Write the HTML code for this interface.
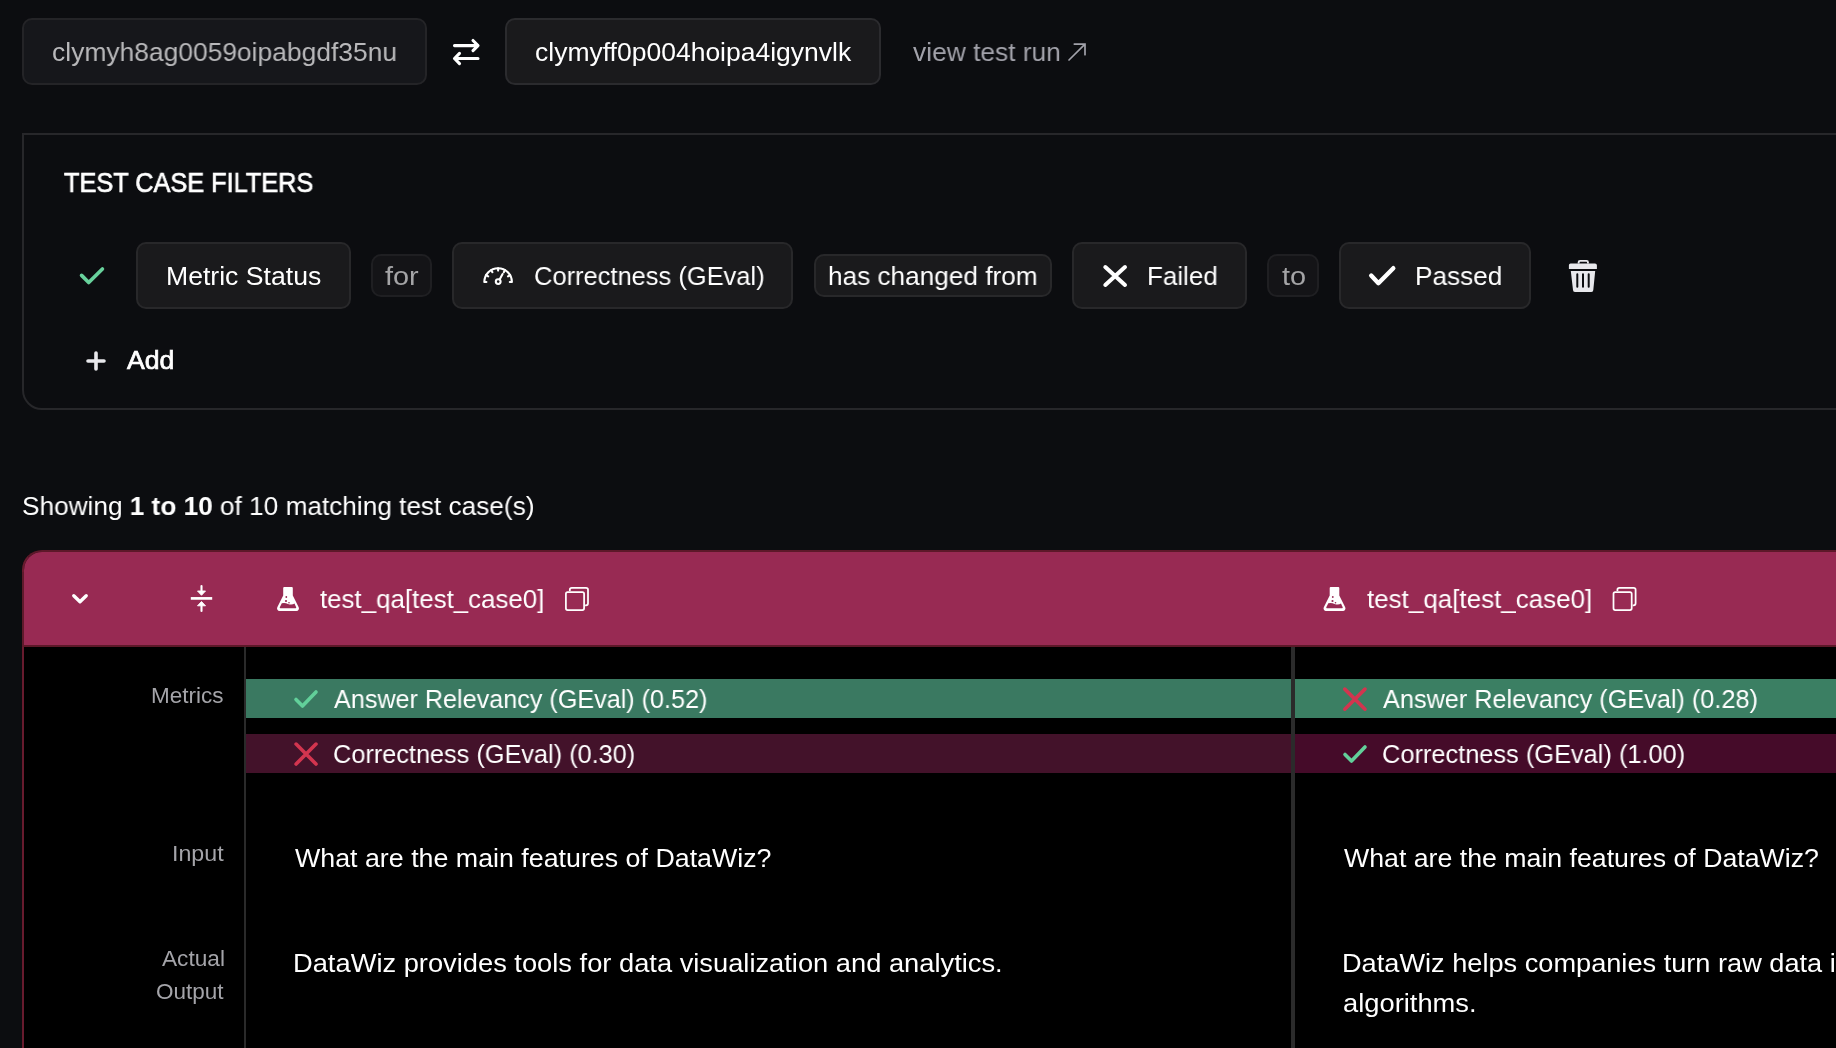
<!DOCTYPE html>
<html><head><meta charset="utf-8"><style>
html,body{margin:0;padding:0;}
body{width:1836px;height:1048px;overflow:hidden;background:#0c0d10;position:relative;font-family:"Liberation Sans",sans-serif;}
.a{position:absolute;box-sizing:border-box;}
.t{will-change:transform;position:absolute;white-space:nowrap;line-height:40px;font-family:"Liberation Sans",sans-serif;}
svg{position:absolute;overflow:visible;}
.box1{left:22px;top:18px;width:405px;height:67px;border:2px solid #242427;background:#16171b;border-radius:10px;}
.box2{left:505px;top:18px;width:376px;height:67px;border:2px solid #2b2b2e;background:#1a1a1c;border-radius:10px;}
.panel{left:22px;top:133px;width:1900px;height:277px;border:2px solid #27272a;border-bottom-left-radius:20px;}
.chip{border:2px solid #28282a;background:#1a1a1c;border-radius:10px;}
.chips{border:2px solid #1f1f22;background:#141417;border-radius:10px;}
.card{left:22px;top:550px;width:1900px;height:600px;border:2px solid #681b2e;border-top-color:#5d1829;border-top-left-radius:20px;background:#000;overflow:hidden;}
.hdr{left:0;top:0;width:100%;height:95px;background:#982a53;border-bottom:2px solid #5c1828;}

</style></head><body>
<div class="a box1"></div>
<div class="a box2"></div>
<svg style="left:0;top:0" width="1836" height="1048" viewBox="0 0 1836 1048">
 <!-- swap -->
 <g stroke="#fff" stroke-width="3.1" fill="none" stroke-linecap="round" stroke-linejoin="round">
  <path d="M454.5 45.6H478M473 40.5L478 45.6L473 50.7"/>
  <path d="M478 58.5H454.5M459.5 53.4L454.5 58.5L459.5 63.6"/>
 </g>
 <!-- arrow -->
 <g stroke="#a2a2aa" stroke-width="1.7" fill="none" stroke-linecap="round">
  <path d="M1069 60L1085 44.2M1074.3 44.1H1085V54.7"/>
 </g>
</svg>
<div class="a panel"></div>
<div class="a chip" style="left:136px;top:242px;width:215px;height:67px"></div>
<div class="a chips" style="left:371px;top:254px;width:61px;height:43px"></div>
<div class="a chip" style="left:452px;top:242px;width:341px;height:67px"></div>
<div class="a chip" style="left:814px;top:254px;width:238px;height:43px"></div>
<div class="a chip" style="left:1072px;top:242px;width:175px;height:67px"></div>
<div class="a chips" style="left:1267px;top:254px;width:52px;height:43px"></div>
<div class="a chip" style="left:1339px;top:242px;width:192px;height:67px"></div>
<div class="a card">
 <div class="a hdr"></div>
</div>
<div class="a" style="left:22px;top:572px;width:2px;height:75px;background:#5e1a2b"></div>
<div class="a" style="left:244px;top:647px;width:2px;height:401px;background:#2a2a2a"></div>
<div class="a" style="left:1291px;top:647px;width:4px;height:401px;background:#2b2b2b"></div>
<div class="a" style="left:246px;top:679px;width:1045px;height:39px;background:#3a7961"></div>
<div class="a" style="left:1295px;top:679px;width:541px;height:39px;background:#3b7f63"></div>
<div class="a" style="left:246px;top:734px;width:1045px;height:39px;background:#43122a"></div>
<div class="a" style="left:1295px;top:734px;width:541px;height:39px;background:#450b29"></div>
<svg style="left:0;top:0" width="1836" height="1048" viewBox="0 0 1836 1048">
 <!-- filter check -->
 <path d="M81.6 275.4L88.7 282.5L102.4 269" stroke="#68d19c" stroke-width="3.7" fill="none" stroke-linecap="round" stroke-linejoin="round"/>
 <!-- gauge -->
 <g stroke="#fff" stroke-width="2.1" fill="none" stroke-linecap="round">
  <path d="M484.3 282A13.8 13.8 0 0 1 511.9 282M484.3 282H486.4M511.9 282H509.8"/>
  <path d="M486.1 275.1L488.2 276.3M491.2 270.1L492.4 272.2M498.1 268.2V270.6M505 270.1L503.8 272.2M510.1 275.1L508 276.3"/>
  <circle cx="498.2" cy="281.6" r="2.4"/>
  <path d="M499.6 279.4L502.6 274"/>
 </g>
 <!-- X failed -->
 <path d="M1105.3 267L1125 285M1125 267L1105.3 285" stroke="#fff" stroke-width="4" stroke-linecap="round"/>
 <!-- check passed -->
 <path d="M1371.2 275.6L1378.4 283.2L1393.3 268.2" stroke="#fff" stroke-width="4.4" fill="none" stroke-linecap="round" stroke-linejoin="round"/>
 <!-- trash -->
 <g fill="#e8e8ec">
  <path d="M1577.7 263.6V262.2A2.3 2.3 0 0 1 1580 259.9H1586.6A2.3 2.3 0 0 1 1588.9 262.2V263.6H1587V262.2A0.5 0.5 0 0 0 1586.5 261.7H1580.1A0.5 0.5 0 0 0 1579.6 262.2V263.6Z"/>
  <path d="M1571 263.4H1595A1.9 1.9 0 0 1 1596.9 265.3V269.1H1568.9V265.3A1.9 1.9 0 0 1 1571 263.4Z"/>
  <path fill-rule="evenodd" d="M1570.8 271H1595.2L1593.3 290A2 2 0 0 1 1591.3 292H1575A2 2 0 0 1 1573 290Z M1576.3 274.3A1 1 0 0 1 1578.3 274.3V286.8A1 1 0 0 1 1576.3 286.8Z M1582 274.3A1 1 0 0 1 1584 274.3V286.8A1 1 0 0 1 1582 286.8Z M1587.7 274.3A1 1 0 0 1 1589.7 274.3V286.8A1 1 0 0 1 1587.7 286.8Z"/>
 </g>
 <!-- plus -->
 <path d="M96 353V369M88 361H104" stroke="#e8e8ec" stroke-width="3.6" stroke-linecap="round"/>
 <!-- chevron -->
 <path d="M73.8 595.8L80 601.8L86.2 595.8" stroke="#fff" stroke-width="3.4" fill="none" stroke-linecap="round" stroke-linejoin="round"/>
 <!-- compress -->
 <path d="M190.8 598.4H212.2" stroke="#fff" stroke-width="2.7"/>
 <path d="M201.5 586V591M201.5 606V611" stroke="#fff" stroke-width="2.1" stroke-linecap="round"/>
 <path d="M197.5 591H205.5L201.5 595.3Z M197.5 605.8H205.5L201.5 601.5Z" fill="#fff" stroke="#fff" stroke-width="0.9" stroke-linejoin="round"/>
 <!-- flask (header 1) -->
 <g id="flask">
  <path fill="#fff" fill-rule="evenodd" d="M284.2 587H291.8A1 1 0 0 1 292.8 588V595.5L298.7 607.3A2.5 2.5 0 0 1 296.5 610.9H279.5A2.5 2.5 0 0 1 277.3 607.3L283.2 595.5V588A1 1 0 0 1 284.2 587Z M281.8 603.3Q285 602.5 288 604Q292 605.3 294.5 603.6L295.8 606.5A1 1 0 0 1 295 608.3H281A1 1 0 0 1 280.2 606.5Z"/>
  <circle cx="286.3" cy="597" r="0.9" fill="#982a53"/>
  <circle cx="286" cy="601" r="1.1" fill="#982a53"/>
  <circle cx="289" cy="602.7" r="0.8" fill="#982a53"/>
 </g>
 <!-- copy (header 1) -->
 <g id="copy" stroke="#fff" stroke-width="1.75" fill="none">
  <rect x="565.9" y="592" width="18.2" height="18" rx="1.7"/>
  <path d="M569.8 591V589.8A2 2 0 0 1 571.8 587.8H586A2 2 0 0 1 588 589.8V603.3A2 2 0 0 1 586 605.3H585.1"/>
 </g>
 <use href="#flask" x="1046.5" y="0"/>
 <use href="#copy" x="1047.6" y="0"/>
 <!-- metric icons -->
 <path d="M296 699.5L302.5 706L316 692" stroke="#62d09a" stroke-width="3.6" fill="none" stroke-linecap="round" stroke-linejoin="round"/>
 <path d="M296.1 744.1L316 764M316 744.1L296.1 764" stroke="#d2354f" stroke-width="3.6" stroke-linecap="round"/>
 <path d="M1344.8 689.1L1365 709.2M1365 689.1L1344.8 709.2" stroke="#d2354f" stroke-width="3.6" stroke-linecap="round"/>
 <path d="M1345 754.5L1351.5 761L1365 747" stroke="#62d09a" stroke-width="3.6" fill="none" stroke-linecap="round" stroke-linejoin="round"/>
</svg>

<div class='t' style='left:51.80px;top:32.00px;font-size:26.5px;color:#b9b9bb;transform:scaleX(0.9965);transform-origin:0 0;'>clymyh8ag0059oipabgdf35nu</div>
<div class='t' style='left:534.80px;top:32.00px;font-size:26.5px;color:#ffffff;'>clymyff0p004hoipa4igynvlk</div>
<div class='t' style='left:913.40px;top:32.00px;font-size:26.5px;color:#a2a2aa;transform:scaleX(0.9939);transform-origin:0 0;'>view test run</div>
<div class='t' style='left:64.20px;top:163.30px;font-size:27px;color:#ffffff;transform:scaleX(0.9372);transform-origin:0 0;-webkit-text-stroke:0.7px #ffffff;'>TEST CASE FILTERS</div>
<div class='t' style='left:165.69px;top:256.00px;font-size:26.5px;color:#ffffff;transform:scaleX(1.0039);transform-origin:0 0;'>Metric Status</div>
<div class='t' style='left:384.60px;top:256.00px;font-size:26.5px;color:#a4a4a6;transform:scaleX(1.0903);transform-origin:0 0;'>for</div>
<div class='t' style='left:533.84px;top:256.00px;font-size:26.5px;color:#ffffff;transform:scaleX(0.9609);transform-origin:0 0;'>Correctness (GEval)</div>
<div class='t' style='left:828.31px;top:256.00px;font-size:26.5px;color:#ffffff;transform:scaleX(0.9881);transform-origin:0 0;'>has changed from</div>
<div class='t' style='left:1146.94px;top:256.00px;font-size:26.5px;color:#ffffff;transform:scaleX(0.9797);transform-origin:0 0;'>Failed</div>
<div class='t' style='left:1282.00px;top:256.00px;font-size:26.5px;color:#a4a4a6;transform:scaleX(1.0905);transform-origin:0 0;'>to</div>
<div class='t' style='left:1414.73px;top:256.00px;font-size:26.5px;color:#ffffff;transform:scaleX(0.9859);transform-origin:0 0;'>Passed</div>
<div class='t' style='left:126.84px;top:340.40px;font-size:25.5px;color:#ffffff;transform:scaleX(1.0435);transform-origin:0 0;-webkit-text-stroke:0.7px #ffffff;'>Add</div>
<div class='t' style='left:22.01px;top:486.40px;font-size:26.5px;color:#ffffff;transform:scaleX(0.9884);transform-origin:0 0;'>Showing <b>1 to 10</b> of 10 matching test case(s)</div>
<div class='t' style='left:319.70px;top:578.50px;font-size:26.5px;color:#ffffff;transform:scaleX(0.9759);transform-origin:0 0;'>test_qa[test_case0]</div>
<div class='t' style='left:1366.60px;top:578.50px;font-size:26.5px;color:#ffffff;transform:scaleX(0.9798);transform-origin:0 0;'>test_qa[test_case0]</div>
<div class='t' style='left:151.30px;top:676.20px;font-size:22.5px;color:#a4a4a9;'>Metrics</div>
<div class='t' style='left:334.30px;top:679.20px;font-size:26.5px;color:#ffffff;transform:scaleX(0.9495);transform-origin:0 0;'>Answer Relevancy (GEval) (0.52)</div>
<div class='t' style='left:333.35px;top:734.40px;font-size:26.5px;color:#ffffff;transform:scaleX(0.9545);transform-origin:0 0;'>Correctness (GEval) (0.30)</div>
<div class='t' style='left:1382.70px;top:679.20px;font-size:26.5px;color:#ffffff;transform:scaleX(0.9533);transform-origin:0 0;'>Answer Relevancy (GEval) (0.28)</div>
<div class='t' style='left:1381.74px;top:734.40px;font-size:26.5px;color:#ffffff;transform:scaleX(0.9576);transform-origin:0 0;'>Correctness (GEval) (1.00)</div>
<div class='t' style='left:171.94px;top:834.00px;font-size:22.5px;color:#a4a4a9;transform:scaleX(1.0312);transform-origin:0 0;'>Input</div>
<div class='t' style='left:294.90px;top:838.20px;font-size:26.5px;color:#ffffff;transform:scaleX(1.0110);transform-origin:0 0;'>What are the main features of DataWiz?</div>
<div class='t' style='left:1343.80px;top:837.70px;font-size:26.5px;color:#ffffff;transform:scaleX(1.0076);transform-origin:0 0;'>What are the main features of DataWiz?</div>
<div class='t' style='left:162.10px;top:938.80px;font-size:22.5px;color:#a4a4a9;transform:scaleX(1.0066);transform-origin:0 0;'>Actual</div>
<div class='t' style='left:155.70px;top:971.90px;font-size:22.5px;color:#a4a4a9;transform:scaleX(0.9970);transform-origin:0 0;'>Output</div>
<div class='t' style='left:293.34px;top:942.80px;font-size:26.5px;color:#ffffff;transform:scaleX(1.0295);transform-origin:0 0;'>DataWiz provides tools for data visualization and analytics.</div>
<div class='t' style='left:1341.75px;top:943.00px;font-size:26.5px;color:#ffffff;transform:scaleX(1.0253);transform-origin:0 0;'>DataWiz helps companies turn raw data into actionable insights</div>
<div class='t' style='left:1342.77px;top:982.90px;font-size:26.5px;color:#ffffff;transform:scaleX(1.0307);transform-origin:0 0;'>algorithms.</div>
</body></html>
